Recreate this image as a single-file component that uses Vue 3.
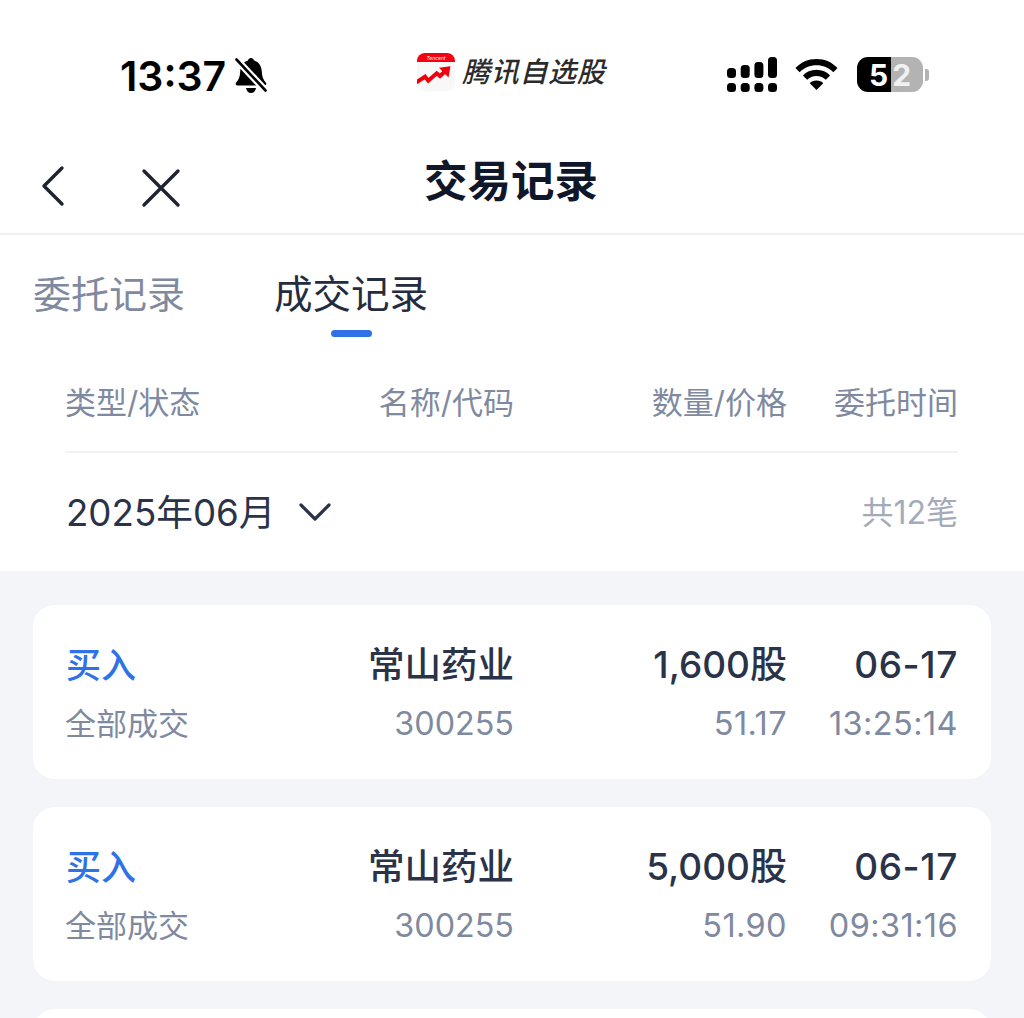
<script setup>
const heads = ['类型/状态', '名称/代码', '数量/价格', '委托时间']
const rows = [
  { qty: '1,600股', price: '51.17', date: '06-17', time: '13:25:14' },
  { qty: '5,000股', price: '51.90', date: '06-17', time: '09:31:16' },
]
</script>

<template>
  <div class="page">
    <div class="status">
      <div class="clock">
        <span>13:37</span>
        <svg class="bell" viewBox="0 0 32 36" width="32" height="36">
          <path d="M16 0c-1.600 0-2.700 1-3 2.500C8 4 5.500 8.200 5.200 13.500 4.900 19 3.500 22 1.200 24.500.2 25.800.8 27.500 2.500 27.500h27c1.700 0 2.300-1.700 1.300-3C28.500 22 27.100 19 26.800 13.500 26.500 8.200 24 4 19 2.500 18.700 1 17.600 0 16 0z" fill="#000"/>
          <path d="M11 30c.5 3 2.500 5 5 5s4.500-2 5-5z" fill="#000"/>
          <path d="M1 1 31 33" stroke="#fff" stroke-width="7"/>
          <path d="M1.500 1.500 30.500 32.500" stroke="#000" stroke-width="2.600" stroke-linecap="round"/>
        </svg>
      </div>
      <div class="brand">
        <svg class="logo" viewBox="0 0 38 38" width="38" height="38">
          <defs><clipPath id="lg"><rect width="38" height="38" rx="8"/></clipPath></defs>
          <g clip-path="url(#lg)">
            <rect width="38" height="38" fill="#f8f8f8"/>
            <rect width="38" height="9" fill="#f5000f"/>
            <path d="M-1 29.500 8 23.700l3.300 4 8.400-7.400 3.300 2.700 6-5.500" fill="none" stroke="#f0000c" stroke-width="4"/>
            <path d="M22 14.800 33.500 13.200 31.500 24.500z" fill="#f0000c"/>
          </g>
          <text x="19" y="6.500" text-anchor="middle" class="lt">Tencent</text>
        </svg>
        <span class="bname">腾讯自选股</span>
      </div>
      <div class="sys">
        <svg viewBox="0 0 50 35" width="50" height="35">
          <g fill="#000">
            <rect x="0" y="11" width="9" height="10" rx="3.500"/>
            <rect x="13.700" y="8" width="9" height="13" rx="3.500"/>
            <rect x="27.400" y="5" width="9" height="16" rx="3.500"/>
            <rect x="41" y="0" width="9" height="21" rx="3.500"/>
            <rect x="0" y="26" width="9" height="9" rx="3.500"/>
            <rect x="13.700" y="26" width="9" height="9" rx="3.500"/>
            <rect x="27.400" y="26" width="9" height="9" rx="3.500"/>
            <rect x="41" y="26" width="9" height="9" rx="3.500"/>
          </g>
        </svg>
        <svg class="wifi" viewBox="0 0 46 34" width="43" height="32">
          <path d="M23 0C14 0 6.500 3.500 0.500 9.500l4.500 4.500C10 9 16 6.500 23 6.500S36 9 41 14l4.500-4.500C39.500 3.500 32 0 23 0z" fill="#000"/>
          <path d="M23 11.500c-6 0-11 2.300-14.500 6l4.500 4.500c2.600-2.600 6-4 10-4s7.400 1.400 10 4l4.500-4.500c-3.500-3.700-8.500-6-14.500-6z" fill="#000"/>
          <path d="M23 23c-3.200 0-5.800 1.100-7.200 2.800L23 33l7.200-7.200C28.800 24.100 26.200 23 23 23z" fill="#000"/>
        </svg>
        <div class="battery">
          <div class="cell"><span class="f">5</span><span class="g">2</span></div>
          <i class="nub"></i>
        </div>
      </div>
    </div>

    <div class="nav">
      <svg class="back" viewBox="0 0 26 42" width="26" height="42">
        <path d="M22 3 4 21l18 18" fill="none" stroke="#1f2430" stroke-width="3.400" stroke-linecap="round" stroke-linejoin="round"/>
      </svg>
      <svg class="close" viewBox="0 0 42 42" width="42" height="42">
        <path d="M4 4 38 38M38 4 4 38" fill="none" stroke="#1f2430" stroke-width="3.400" stroke-linecap="round"/>
      </svg>
      <div class="title">交易记录</div>
    </div>

    <div class="tabs">
      <span class="tab">委托记录</span>
      <span class="tab on">成交记录</span>
    </div>

    <div class="head">
      <div class="cols">
        <span v-for="h in heads" :key="h">{{ h }}</span>
      </div>
    </div>

    <div class="month">
      <div class="mleft">
        <span>2025年06月</span>
        <svg class="chev" viewBox="0 0 32 20" width="32" height="20">
          <path d="M2 3l14 14L30 3" fill="none" stroke="#2a3348" stroke-width="3.200" stroke-linecap="round" stroke-linejoin="round"/>
        </svg>
      </div>
      <span class="count">共12笔</span>
    </div>

    <div class="list">
      <div class="card" v-for="(r, i) in rows" :key="i">
        <div class="c1"><div class="buy">买入</div><div class="sub s1">全部成交</div></div>
        <div class="c2"><div class="main">常山药业</div><div class="sub code">300255</div></div>
        <div class="c3"><div class="main">{{ r.qty }}</div><div class="sub">{{ r.price }}</div></div>
        <div class="c4"><div class="main num">{{ r.date }}</div><div class="sub">{{ r.time }}</div></div>
      </div>
      <div class="card"></div>
    </div>
  </div>
</template>

<style>
html, body { margin: 0; background: #fff; }
</style>

<style scoped>
.page {
  width: 1024px;
  height: 1018px;
  overflow: hidden;
  background: #fff;
  font-family: Inter, "Noto Sans CJK SC", sans-serif;
  color: #2a3348;
  display: flex;
  flex-direction: column;
}
.status {
  height: 130px;
  flex: none;
  display: flex;
  align-items: center;
  position: relative;
  padding: 22px 0 0 120px;
  box-sizing: border-box;
}
.clock {
  display: flex;
  align-items: center;
  gap: 9px;
  font-family: Inter, sans-serif;
  font-size: 41px;
  font-weight: 600;
  color: #000;
  line-height: 1;
}
.brand {
  position: absolute;
  left: 417px;
  top: 53px;
  display: flex;
  align-items: center;
  gap: 7px;
}
.lt { font: italic 5px Inter, sans-serif; fill: #fff; }
.bname {
  font-size: 28px;
  font-weight: 500;
  color: #2b2b2b;
  font-style: italic;
  letter-spacing: 0.7px;
  line-height: 38px;
}
.sys {
  position: absolute;
  left: 727px;
  top: 57px;
  display: flex;
  align-items: center;
  gap: 18px;
}
.wifi { margin-right: 1px; }
.battery { display: flex; align-items: center; gap: 2px; }
.cell {
  width: 66px;
  height: 35px;
  border-radius: 11px;
  overflow: hidden;
  background: linear-gradient(90deg, #000 0 34px, #b3b3b3 34px);
  display: flex;
  justify-content: center;
  align-items: center;
  gap: 4px;
  font-family: Inter, sans-serif;
  font-size: 30px;
  font-weight: 700;
  color: #fff;
  line-height: 1;
}
.g { color: #f1f1f1; }
.nub {
  width: 4px;
  height: 12px;
  background: #b3b3b3;
  border-radius: 0 3px 3px 0;
}
.nav {
  height: 105px;
  flex: none;
  position: relative;
  border-bottom: 2px solid #eef0f4;
  box-sizing: border-box;
  display: flex;
  align-items: center;
  justify-content: center;
}
.back { position: absolute; left: 40px; top: 35px; }
.close { position: absolute; left: 140px; top: 37px; }
.title {
  font-size: 43.500px;
  font-weight: 700;
  color: #10172a;
  line-height: 1;
  margin: 1px 2px 0 0;
}
.tabs {
  height: 110px;
  flex: none;
  display: flex;
  gap: 89px;
  padding: 34px 0 0 33px;
  box-sizing: border-box;
  font-size: 38px;
  line-height: 50px;
}
.tab { color: #7f8aa0; position: relative; }
.tab.on { color: #242c40; font-size: 38.500px; }
.tab.on::after {
  content: "";
  position: absolute;
  left: 57px;
  top: 61px;
  width: 41px;
  height: 7px;
  border-radius: 4px;
  background: #2f72e8;
}
.head {
  height: 108px;
  flex: none;
  padding: 0 66px 0 65px;
  box-sizing: border-box;
}
.cols {
  display: grid;
  grid-template-columns: 201px 248px 273px 171px;
  height: 108px;
  box-sizing: border-box;
  border-bottom: 2px solid #f0f2f5;
  align-items: center;
  font-size: 31px;
  color: #7f8aa0;
  padding-top: 4px;
}
.cols span:not(:first-child) { text-align: right; }
.month {
  height: 118px;
  flex: none;
  padding: 0 66px 4px;
  box-sizing: border-box;
  display: flex;
  align-items: center;
  justify-content: space-between;
}
.mleft {
  display: flex;
  align-items: center;
  gap: 24px;
  font-size: 36.700px;
  color: #2a3348;
}
.chev { margin-top: 4px; }
.count { font-size: 32px; color: #a3abbb; }
.list {
  flex: 1;
  background: #f3f5f9;
  padding: 34px 33px 0;
  display: flex;
  flex-direction: column;
  gap: 28px;
}
.card {
  flex: none;
  height: 174px;
  background: #fff;
  border-radius: 22px;
  padding: 2px 33px 0;
  box-sizing: border-box;
  display: grid;
  grid-template-columns: 200px 248px 273px 171px;
  align-items: center;
}
.c2, .c3, .c4 { text-align: right; }
.buy { font-size: 35px; line-height: 44px; color: #2f72e8; font-weight: 500; margin-bottom: 17px; }
.main { font-size: 37px; line-height: 44px; font-weight: 500; color: #2a3348; margin-bottom: 17px; }
.c2 .main { font-size: 36.500px; }
.num { letter-spacing: 0.6px; }
.sub { font-size: 32.500px; line-height: 40px; color: #7f8aa0; letter-spacing: 0.4px; }
.code { font-size: 32.300px; letter-spacing: 0; }
.s1 { font-size: 31px; letter-spacing: 0; margin-left: -1px; }
</style>
